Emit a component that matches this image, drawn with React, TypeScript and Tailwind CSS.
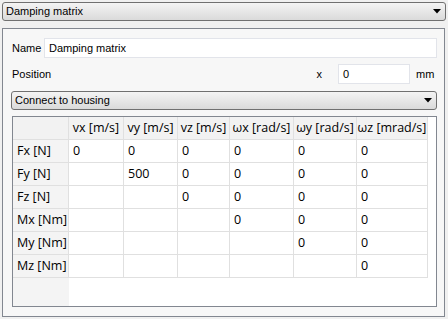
import React from "react";

const cols = [
  { label: "", w: "w-[56px]" },
  { label: "vx [m/s]", w: "w-[55px]" },
  { label: "vy [m/s]", w: "w-[54px]" },
  { label: "vz [m/s]", w: "w-[52px]" },
  { label: "ωx [rad/s]", w: "w-[64px]" },
  { label: "ωy [rad/s]", w: "w-[63px]" },
  { label: "ωz [mrad/s]", w: "w-[71px]" },
];

const rows: { label: string; vals: string[] }[] = [
  { label: "Fx [N]", vals: ["0", "0", "0", "0", "0", "0"] },
  { label: "Fy [N]", vals: ["", "500", "0", "0", "0", "0"] },
  { label: "Fz [N]", vals: ["", "", "0", "0", "0", "0"] },
  { label: "Mx [Nm]", vals: ["", "", "", "0", "0", "0"] },
  { label: "My [Nm]", vals: ["", "", "", "", "0", "0"] },
  { label: "Mz [Nm]", vals: ["", "", "", "", "", "0"] },
];

function Arrow() {
  return (
    <svg width="8" height="5" viewBox="0 0 8 5" className="shrink-0">
      <path d="M0 0 H8 L4 4.5 Z" fill="#000" />
    </svg>
  );
}

function Dropdown({ text, className }: { text: string; className?: string }) {
  return (
    <div
      className={
        "flex items-center justify-between border border-[#707070] rounded-[3px] bg-gradient-to-b from-[#f4f4f4] to-[#dadada] pl-[3px] pr-[4px] " +
        (className ?? "")
      }
    >
      <span>{text}</span>
      <Arrow />
    </div>
  );
}

export default function App() {
  return (
    <div
      className="w-[448px] h-[319px] bg-[#f0f0f0] flex flex-col pt-[2px] pl-[2px] pr-[2px] pb-[2px] text-[11px] text-black"
      style={{ fontFamily: '"Liberation Sans", Arial, sans-serif' }}
    >
      <Dropdown text="Damping matrix" className="h-[19px]" />
      <div className="mt-[7px] mr-[1px] flex-1 border border-[#828790] bg-[#f7f7f7] flex flex-col pt-[9px] pl-[8px] pr-[7px] pb-[9px]">
        <div className="flex items-center h-[20px]">
          <span className="w-[33px] pl-[1px]">Name</span>
          <div className="flex-1 h-[20px] bg-white border border-[#e2e4ea] flex items-center pl-[4px]">
            Damping matrix
          </div>
        </div>
        <div className="flex items-center h-[20px] mt-[6px]">
          <span className="pl-[1px]">Position</span>
          <div className="flex-1" />
          <span>x</span>
          <div className="ml-[16px] w-[72px] h-[20px] bg-white border border-[#e2e4ea] flex items-center pl-[4px]">
            0
          </div>
          <span className="w-[27px] pl-[6px]">mm</span>
        </div>
        <Dropdown text="Connect to housing" className="h-[19px] mt-[7px]" />
        <div
          className="mt-[6px] ml-[1px] flex-1 border border-[#828790] bg-white flex flex-col text-[12.5px]"
          style={{ fontFamily: '"Open Sans", "Noto Sans", sans-serif' }}
        >
          <div className="flex">
            {cols.map((c, i) => (
              <div
                key={i}
                className={
                  c.w +
                  " h-[23px] shrink-0 border-r border-b border-[#e0e0e0] bg-[#f2f2f2] flex items-center justify-center whitespace-nowrap"
                }
              >
                {c.label}
              </div>
            ))}
            <div className="flex-1 h-[23px] bg-white" />
          </div>
          {rows.map((r, ri) => (
            <div key={ri} className="flex">
              <div className="w-[56px] h-[23px] shrink-0 border-r border-b border-[#e0e0e0] bg-[#f4f4f4] flex items-center pl-[4px] whitespace-nowrap">
                {r.label}
              </div>
              {r.vals.map((v, vi) => (
                <div
                  key={vi}
                  className={
                    cols[vi + 1].w +
                    " h-[23px] shrink-0 border-r border-b border-[#e0e0e0] flex items-center pl-[4px]"
                  }
                >
                  {v}
                </div>
              ))}
            </div>
          ))}
          <div className="flex-1 flex">
            <div className="w-[56px] bg-[#f4f4f4]" />
          </div>
        </div>
      </div>
    </div>
  );
}
